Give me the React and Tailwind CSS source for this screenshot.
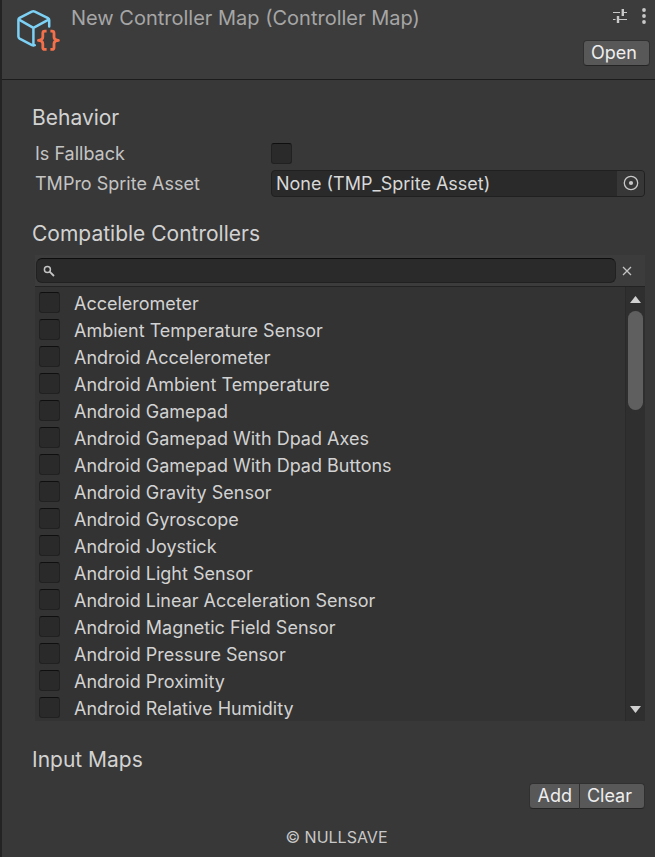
import { useRef, useState } from 'react';

const CONTROLLERS = [
  'Accelerometer',
  'Ambient Temperature Sensor',
  'Android Accelerometer',
  'Android Ambient Temperature',
  'Android Gamepad',
  'Android Gamepad With Dpad Axes',
  'Android Gamepad With Dpad Buttons',
  'Android Gravity Sensor',
  'Android Gyroscope',
  'Android Joystick',
  'Android Light Sensor',
  'Android Linear Acceleration Sensor',
  'Android Magnetic Field Sensor',
  'Android Pressure Sensor',
  'Android Proximity',
  'Android Relative Humidity',
];

const checkboxClass =
  'block h-[21px] w-[21px] shrink-0 appearance-none rounded-[3px] border border-[#212121] border-t-[#0f0f0f] bg-[#2a2a2a] checked:bg-[#46607c]';

const buttonClass =
  'h-[26px] border border-[#303030] border-b-[#242424] bg-[#585858] text-lg leading-6 text-[#eeeeee] hover:bg-[#676767]';

/* Asset icon: blue cube with orange braces */
const AssetIcon = () => (
  <svg className="h-[44px] w-[44px]" viewBox="0 0 44 44" fill="none" strokeLinecap="round" strokeLinejoin="round">
    <g stroke="#7dd1f5" strokeWidth="2.5">
      <path d="M33.2 18.5V12Q33.2 10.8 32 10.2L18.8 3.6Q17.3 2.9 15.8 3.6L3.6 9.9Q2.4 10.6 2.4 12V28.6Q2.4 30 3.6 30.7L16 37.2Q17.4 37.8 18.8 37.2" />
      <path d="M3 11.7L17.4 19.8L32.6 11.7M17.4 19.8V37" />
    </g>
    <g stroke="#f4704a" strokeWidth="2.8" strokeLinecap="butt">
      <path d="M30.6 23.2H28.8Q26.8 23.2 26.8 25.2V29Q26.8 32 22.4 32.4Q26.8 32.8 26.8 35.4V39.4Q26.8 41.4 28.8 41.4H30.6" />
      <path d="M34.4 23.2H36Q38 23.2 38 25.2V29Q38 32 42.4 32.4Q38 32.8 38 35.4V39.4Q38 41.4 36 41.4H34.4" />
    </g>
  </svg>
);

const PresetIcon = () => (
  <svg className="h-4 w-4" viewBox="0 0 16 16" fill="none" stroke="#c8c8c8">
    <path d="M1 4.5H8M11 4.5H15M1 11.5H3.5M6 11.5H15" strokeWidth="1.2" />
    <path d="M10.8 1V8M6 8V15" strokeWidth="2.4" />
  </svg>
);

const MenuIcon = () => (
  <svg className="h-4 w-1" viewBox="0 0 4 16" fill="#c8c8c8">
    <circle cx="2" cy="2" r="1.9" />
    <circle cx="2" cy="8" r="1.9" />
    <circle cx="2" cy="14" r="1.9" />
  </svg>
);

const SectionTitle = ({ children }) => (
  <h2 className="text-[21px] leading-7 text-[#d2d2d2]">{children}</h2>
);

/**
 * Searchable check list of controllers
 */
const ControllerList = () => {
  const [search, setSearch] = useState('');
  const listRef = useRef(null);

  const visible = CONTROLLERS.filter((name) =>
    name.toLowerCase().includes(search.toLowerCase())
  );

  const scroll = (amount) => listRef.current.scrollBy({ top: amount });

  return (
    <div className="ml-[3px] mt-[7px]">
      <div className="flex h-8 items-center border-b border-[#232323] bg-[#3c3c3c] pl-px pr-[7px]">
        <label className="flex h-[25px] flex-1 items-center rounded-md border border-[#212121] border-t-[#0d0d0d] bg-[#2a2a2a] pl-[6px]">
          <svg className="h-3 w-3" viewBox="0 0 12 12" fill="none" stroke="#c4c4c4">
            <circle cx="4.4" cy="4.4" r="3" strokeWidth="1.5" />
            <path d="M6.6 6.6L11 11" strokeWidth="1.8" />
          </svg>
          <input
            type="text"
            aria-label="Search controllers"
            value={search}
            onChange={(e) => setSearch(e.target.value)}
            className="min-w-0 flex-1 bg-transparent px-2 text-base text-[#d2d2d2] outline-none"
          />
        </label>
        <button
          type="button"
          aria-label="Clear search"
          onClick={() => setSearch('')}
          className="flex h-6 w-[22px] items-center justify-center"
        >
          <svg className="h-[10px] w-[10px]" viewBox="0 0 10 10" stroke="#c4c4c4" strokeWidth="1.3">
            <path d="M1 1L9 9M9 1L1 9" />
          </svg>
        </button>
      </div>

      <div className="flex h-[434px] bg-[#333333]">
        <ul ref={listRef} className="flex-1 overflow-hidden pt-[3px]">
          {visible.map((name) => (
            <li key={name}>
              <label className="flex h-[27px] items-start pl-1 text-lg leading-[27px] text-[#d2d2d2]">
                <input type="checkbox" className={`${checkboxClass} mr-[14px] mt-[2px]`} />
                {name}
              </label>
            </li>
          ))}
        </ul>

        {/* Scroll bar */}
        <div className="flex w-5 flex-col items-center border-l border-[#2a2a2a] bg-[#2f2f2f]">
          <button
            type="button"
            aria-label="Scroll up"
            onClick={() => scroll(-27)}
            className="flex h-6 w-full items-center justify-center"
          >
            <svg className="h-[7px] w-[11px]" viewBox="0 0 11 7" fill="#d0d0d0">
              <path d="M5.5 0L11 7H0Z" />
            </svg>
          </button>
          <div className="w-[15px] flex-1">
            <div className="h-[99px] rounded-full bg-[#5f5f5f]" />
          </div>
          <button
            type="button"
            aria-label="Scroll down"
            onClick={() => scroll(27)}
            className="flex h-6 w-full items-center justify-center"
          >
            <svg className="h-[7px] w-[11px]" viewBox="0 0 11 7" fill="#d0d0d0">
              <path d="M5.5 7L0 0H11Z" />
            </svg>
          </button>
        </div>
      </div>
    </div>
  );
};

/**
 * Inspector panel for a controller map asset
 */
const App = () => {
  return (
    <div className="min-h-screen border-l-2 border-[#232323] bg-[#383838] font-['Inter',sans-serif]">
      {/* Header */}
      <header className="flex h-20 items-start border-b border-[#1c1c1c] bg-[#3c3c3c] pl-[14px] pr-[5px] pt-2">
        <AssetIcon />
        <h1 className="ml-[11px] flex-1 text-xl leading-5 text-[#a6a6a6]">
          New Controller Map (Controller Map)
        </h1>
        <div className="flex flex-col items-end">
          <div className="flex h-4 items-center gap-[14px] pr-1">
            <button type="button" aria-label="Presets">
              <PresetIcon />
            </button>
            <button type="button" aria-label="More options">
              <MenuIcon />
            </button>
          </div>
          <button type="button" className={`${buttonClass} mt-4 rounded pl-[7px] pr-3`}>
            Open
          </button>
        </div>
      </header>

      <main className="pb-3 pl-[30px] pr-[10px] pt-6">
        <SectionTitle>Behavior</SectionTitle>
        <div className="ml-[3px] mt-[6px] text-lg text-[#c4c4c4]">
          <div className="flex h-[30px] items-center">
            <label htmlFor="fallback" className="w-[236px] pt-[2px]">
              Is Fallback
            </label>
            <input id="fallback" type="checkbox" className={checkboxClass} />
          </div>
          <div className="flex h-[30px] items-center">
            <label htmlFor="sprite-asset" className="w-[236px] pt-[2px]">
              TMPro Sprite Asset
            </label>
            <div className="flex h-[27px] min-w-0 flex-1 overflow-hidden rounded border border-[#202020] bg-[#2a2a2a]">
              <input
                id="sprite-asset"
                type="text"
                readOnly
                defaultValue="None (TMP_Sprite Asset)"
                className="min-w-0 flex-1 bg-transparent px-1 pt-[2px] text-[#d8d8d8] outline-none"
              />
              <button
                type="button"
                aria-label="Select asset"
                className="flex w-[27px] items-center justify-center bg-[#373737]"
              >
                <svg className="h-4 w-4" viewBox="0 0 16 16" fill="none">
                  <circle cx="8" cy="8" r="6.7" stroke="#c8c8c8" strokeWidth="1.3" />
                  <circle cx="8" cy="8" r="2.1" fill="#c8c8c8" />
                </svg>
              </button>
            </div>
          </div>
        </div>

        <div className="mt-[22px]">
          <SectionTitle>Compatible Controllers</SectionTitle>
          <ControllerList />
        </div>

        <div className="mt-[25px]">
          <SectionTitle>Input Maps</SectionTitle>
          <div className="mt-[9px] flex justify-end">
            <button type="button" className={`${buttonClass} rounded-l px-[7px]`}>
              Add
            </button>
            <button type="button" className={`${buttonClass} rounded-r border-l-0 pl-[7px] pr-3`}>
              Clear
            </button>
          </div>
        </div>

        <footer className="mt-4 pr-1 text-center text-base leading-6 text-[#c8c8c8]">© NULLSAVE</footer>
      </main>
    </div>
  );
};

export default App;
